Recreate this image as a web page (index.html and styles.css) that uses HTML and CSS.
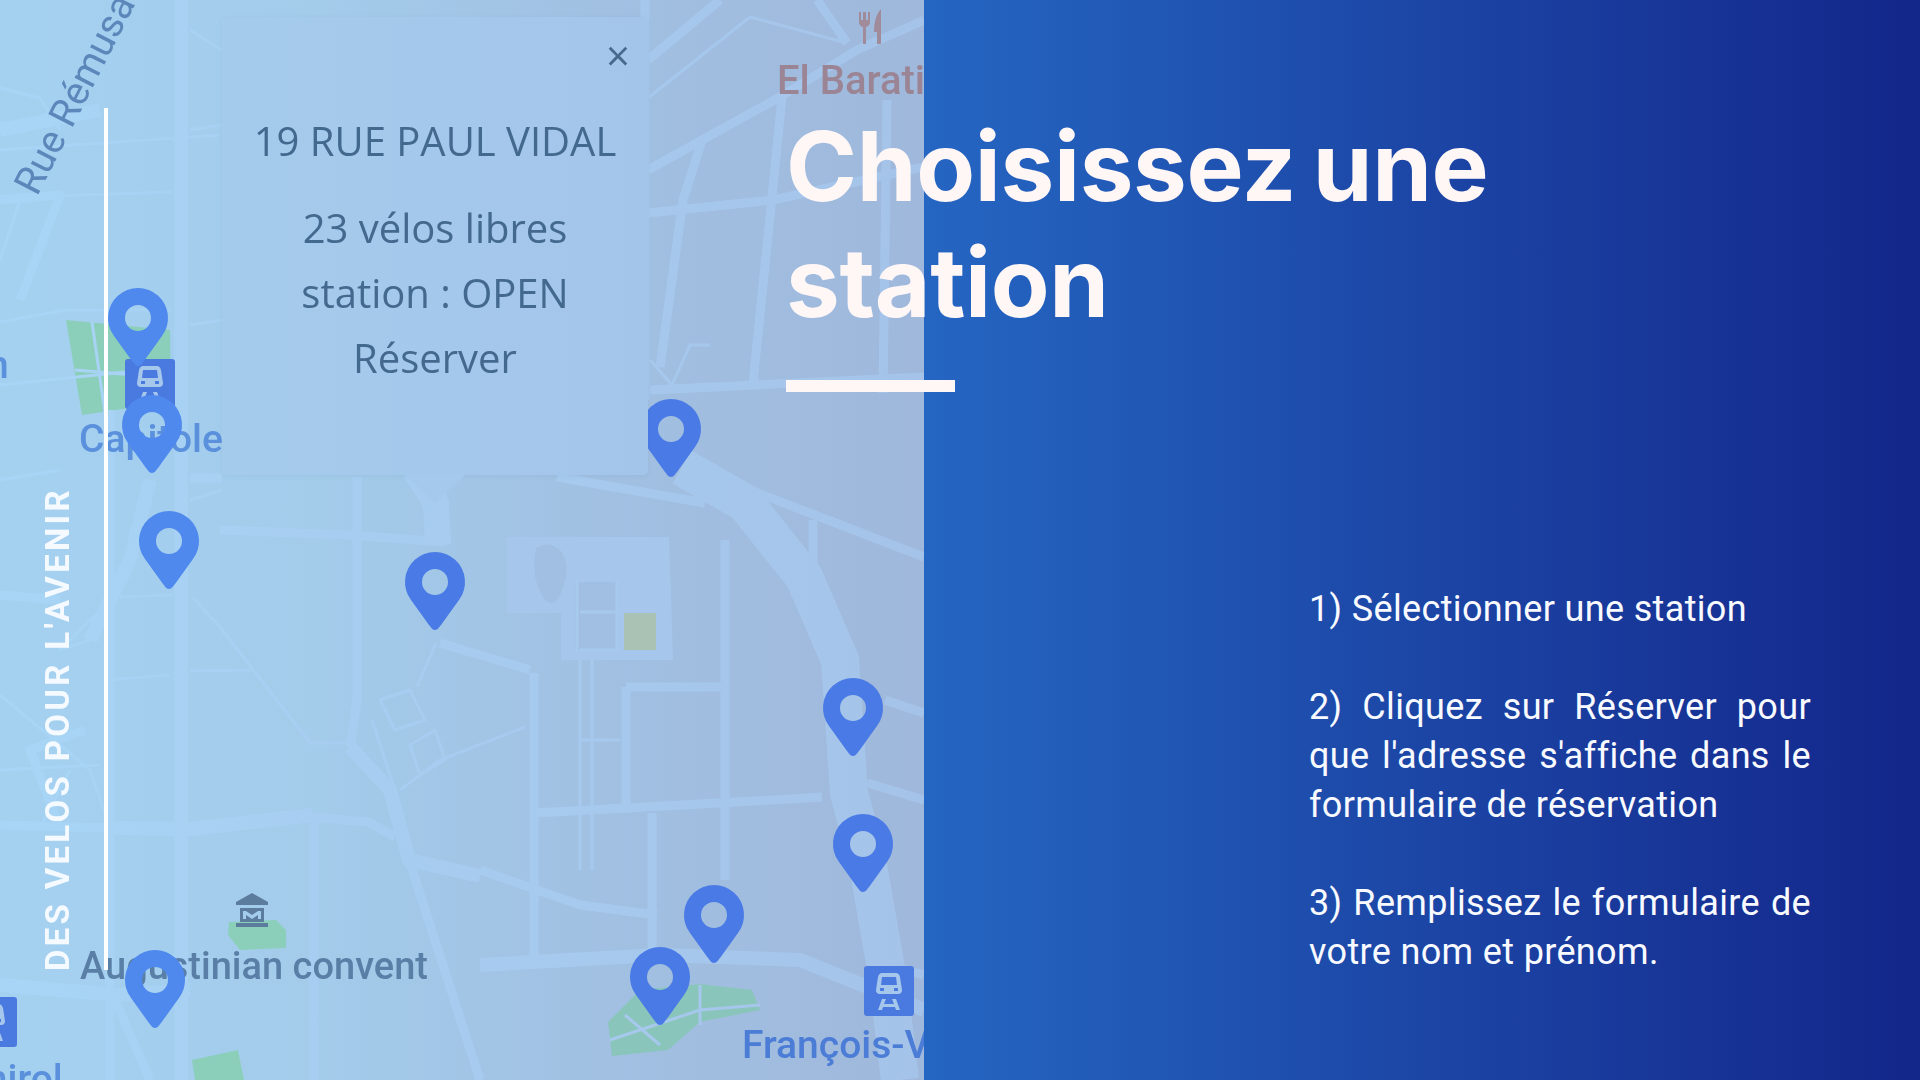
FILE: index.html
```html
<!DOCTYPE html>
<html lang="fr">
<head>
<meta charset="utf-8">
<title>Choisissez une station</title>
<link rel="stylesheet" href="styles.css">
</head>
<body>
<main class="stage">
  <section class="map-panel">
    <svg class="map" viewBox="0 0 924 1080" width="924" height="1080" aria-label="Carte de Toulouse">
      <defs>
        <linearGradient id="road" gradientUnits="userSpaceOnUse" x1="0" y1="0" x2="924" y2="0">
          <stop offset="0" stop-color="#a8d5f6"/>
          <stop offset="0.4" stop-color="#a7cdf1"/>
          <stop offset="1" stop-color="#a5c3e9"/>
        </linearGradient>
        <symbol id="pin" viewBox="-31 -31 62 80" width="62" height="80" overflow="visible">
          <path fill-rule="evenodd" d="M0 48 C-3 48 -4 45 -6 43 L-24 18 A30 30 0 1 1 24 18 L6 43 C4 45 3 48 0 48 Z M13 0 A13 13 0 1 0 -13 0 A13 13 0 1 0 13 0 Z"/>
        </symbol>
        <symbol id="train" viewBox="0 0 50 50" width="50" height="50">
          <rect class="station-bg" width="50" height="50" rx="3"/>
          <path class="station-fg" d="M18 7 H32 Q35 7 36 11 L38 24 Q38 28 34 28 H16 Q12 28 12 24 L14 11 Q15 7 18 7 Z M18 11 L17 19 H33 L32 11 Z M16 22 V25 H20 V22 Z M30 22 V25 H34 V22 Z"/>
          <path class="station-fg" d="M14 44 L18 33 H22 L20 38 H30 L28 33 H32 L36 44 H32 L31 41 H19 L18 44 Z"/>
        </symbol>
      </defs>

      <g class="parks">
        <path d="M66 320 L170 330 L171 395 L150 405 L82 415 Z"/>
        <path d="M229 922 L276 920 L286 930 L286 948 L240 950 L228 935 Z"/>
        <path d="M192 1060 L238 1050 L244 1080 L195 1080 Z"/>
        <path class="park-right" d="M608 1022 L640 990 L700 984 L752 990 L760 1010 L700 1022 L668 1050 L612 1056 Z"/>
      </g>

      <g class="roads plaza">
        <path d="M507 537 H669 L673 660 H561 V613 H507 Z"/>
      </g>
      <path class="block" d="M575 582 H617 V650 H575 Z"/>
      <path class="block" d="M536 548 Q548 540 560 550 Q572 565 562 590 Q555 610 545 600 Q530 580 536 548 Z"/>
      <path class="park-sand" d="M624 613 H656 V650 H624 Z"/>

      <g class="roads thin">
        <path d="M0 150 L220 135"/>
        <path d="M20 197 L172 192"/>
        <path d="M20 200 L0 260"/>
        <path d="M0 88 L40 98 L60 130"/>
        <path d="M190 30 L222 50"/>
        <path d="M0 322 L66 310 L172 310"/>
        <path d="M92 322 L106 420"/>
        <path d="M0 385 L125 372"/>
        <path d="M75 370 L170 378"/>
        <path d="M60 470 L0 480"/>
        <path d="M190 130 L222 125"/>
        <path d="M190 325 L222 320"/>
        <path d="M190 500 L222 490"/>
        <path d="M0 695 L90 770 L110 828"/>
        <path d="M0 770 L100 765"/>
        <path d="M40 828 L70 770"/>
        <path d="M100 610 L60 650 L90 640"/>
        <path d="M193 598 L220 627 L310 743 L346 743"/>
        <path d="M190 671 L251 670"/>
        <path d="M108 680 L170 675"/>
        <path d="M120 597 L173 595"/>
        <path d="M400 790 L440 760 L525 727"/>
        <path d="M417 687 L436 643"/>
        <path d="M380 700 L410 690 L425 720 L395 730 Z"/>
        <path d="M410 745 L435 730 L445 760 L420 775 Z"/>
        <path d="M372 720 L395 790"/>
        <path d="M580 612 H620 M580 650 H620 M577 580 V652 M617 580 V652"/>
        <path d="M580 740 H620 M580 660 V870 M592 660 V870"/>
        <path d="M648 98 L750 17 L843 42"/>
        <path d="M650 360 L672 385 L690 345 H710"/>
        <path d="M610 1040 L700 1010 L760 1005"/>
        <path d="M625 1015 L660 1045 M700 985 L700 1025"/>
      </g>

      <g class="roads mid">
        <path d="M0 200 L60 195 L20 300"/>
        <path d="M357 477 V700 L350 747"/>
        <path d="M220 530 L350 535 L445 542"/>
        <path d="M557 477 L705 503"/>
        <path d="M750 490 L924 557"/>
        <path d="M813 520 V577"/>
        <path d="M725 540 V880"/>
        <path d="M885 700 L924 713"/>
        <path d="M867 783 L924 800"/>
        <path d="M534 813 L718 803 L822 797"/>
        <path d="M626 687 V813"/>
        <path d="M626 687 H725"/>
        <path d="M534 673 V960"/>
        <path d="M440 643 L530 670"/>
        <path d="M220 827 L310 817 L368 822 L395 837"/>
        <path d="M314 813 V1080"/>
        <path d="M652 813 V950"/>
        <path d="M648 60 L720 0"/>
        <path d="M648 170 L780 97 L857 50 L924 20"/>
        <path d="M817 0 L847 43"/>
        <path d="M648 213 L773 200 L924 167"/>
        <path d="M703 137 L683 200 L660 367"/>
        <path d="M782 97 L773 187 L753 383"/>
        <path d="M887 100 L883 393"/>
        <path d="M650 390 L924 377"/>
        <path d="M645 0 V400"/>
        <path d="M480 870 L580 905 L657 915"/>
        <path d="M0 825 L110 828"/>
        <path d="M0 595 L60 600"/>
        <path d="M85 730 L30 750 L60 828"/>
        <path d="M110 410 V1080"/>
        <path d="M190 478 L222 478"/>
        <path d="M115 1000 L150 1080"/>
        <path d="M409 860 L480 1080"/>
        <path d="M867 960 L924 975"/>
      </g>

      <g class="roads wide">
        <path d="M181 0 V1080"/>
        <path d="M110 828 L190 829 L313 815"/>
        <path d="M350 747 L390 790 L409 860 L480 876"/>
        <path d="M0 985 L120 995 L190 990"/>
        <path d="M480 965 L660 955 L800 960 L900 1000 L924 1010"/>
        <path d="M0 130 L100 110"/>
        <path d="M90 640 L130 560 L150 480"/>
      </g>

      <path class="roads stem" d="M415 470 L436 503 L438 545"/>
      <path class="roads boulevard" d="M682 467 L745 503 L804 577 L840 660 L849 793 L867 860 L888 980 L900 1080"/>

      <use href="#train" x="125" y="359"/>
      <use href="#train" x="864" y="966"/>
      <use href="#train" x="-33" y="997"/>

      <text class="label label-street" transform="translate(37 197) rotate(-63)">Rue Rémusat</text>
      <text class="label label-transit" x="-13" y="378">n</text>
      <text class="label label-transit" x="79" y="452">Capitole</text>
      <text class="label label-poi" x="80" y="979">Augustinian convent</text>
      <text class="label label-transit-right" x="742" y="1058">François-Verdier</text>
      <text class="label label-food" x="777" y="94">El Barati</text>
      <text class="label label-transit" x="-52" y="1092">Amirol</text>

      <g class="icon-food">
        <path d="M859 12 V22 Q859 26 863 27 V44 H866 V27 Q870 26 870 22 V12 H868 V20 H866 V12 H863 V20 H861 V12 Z"/>
        <path d="M877 44 V32 H874 Q874 16 881 9 V44 Z"/>
      </g>

      <g class="icon-museum">
        <path d="M236 902 L252 893 L268 902 V905 H236 Z"/>
        <path d="M240 908 H264 V922 H240 Z M243 911 V919 H246 V915 L252 919 L258 915 V919 H261 V911 H258 L252 915 L246 911 Z" fill-rule="evenodd"/>
        <path d="M236 923 H268 V927 H236 Z"/>
      </g>

      <g class="pins-left">
        <use href="#pin" x="107" y="287"/>
        <use href="#pin" x="121" y="394"/>
        <use href="#pin" x="138" y="510"/>
        <use href="#pin" x="124" y="949"/>
      </g>
      <g class="pins-right">
        <use href="#pin" x="640" y="398"/>
        <use href="#pin" x="404" y="551"/>
        <use href="#pin" x="822" y="677"/>
        <use href="#pin" x="832" y="813"/>
        <use href="#pin" x="683" y="884"/>
        <use href="#pin" x="629" y="946"/>
      </g>
    </svg>

    <aside class="popup">
      <span class="popup-close">×</span>
      <p class="popup-title">19 RUE PAUL VIDAL</p>
      <p class="popup-line">23 vélos libres</p>
      <p class="popup-line">station : OPEN</p>
      <p class="popup-line">Réserver</p>
    </aside>

    <div class="side-rule"></div>
    <p class="side-label">DES VELOS POUR L'AVENIR</p>
  </section>

  <section class="info-panel">
    <h1 class="title">Choisissez une<br>station</h1>
    <div class="title-rule"></div>
    <div class="steps">
      <p class="step">1) Sélectionner une station</p>
      <p class="step">2) Cliquez sur Réserver pour que l'adresse s'affiche dans le formulaire de réservation</p>
      <p class="step">3) Remplissez le formulaire de votre nom et prénom.</p>
    </div>
  </section>
</main>
</body>
</html>
```

FILE: styles.css
```css
* { box-sizing: border-box; }
html, body { margin: 0; padding: 0; }
body { width: 1920px; height: 1080px; overflow: hidden; background: #13278b; }
p, h1 { margin: 0; }

.stage { display: flex; width: 1920px; height: 1080px; }

/* Map */
.map-panel {
  position: relative;
  flex: 0 0 924px;
  height: 1080px;
  overflow: hidden;
  background: linear-gradient(90deg, #a5d1f1 0%, #a3cbea 35%, #a1c0e2 65%, #9fb8db 100%);
}
.map { display: block; filter: blur(0.7px); }
.parks path { fill: #8bcfbb; }
.parks .park-right { fill: #8ac5bb; }
.park-sand { fill: #a9c2b4; }
.block { fill: #a1bfe2; }
.roads { fill: none; stroke: url(#road); stroke-linejoin: round; stroke-linecap: butt; }
.plaza { fill: #a6c7eb; stroke: none; }
.thin { stroke-width: 3; }
.mid { stroke-width: 9; }
.wide { stroke-width: 14; }
.stem { stroke-width: 26; }
.boulevard { stroke-width: 38; }
.pins-left use { fill: #4f89ee; }
.pins-right use { fill: #4a7ae6; }
.station-bg { fill: #4a79e0; }
.station-fg { fill: #a6c7ec; fill-rule: evenodd; }
.label { font-family: "Roboto", "Noto Sans", sans-serif; font-weight: 500; font-size: 39px; }
.label-street { fill: #5c87bb; font-size: 39px; font-weight: 400; }
.label-transit { fill: #5a90dc; }
.label-transit-right { fill: #4b7cd6; }
.label-poi { fill: #5a7fa6; font-size: 38px; }
.label-food { fill: #9b8595; font-size: 40px; }
.icon-food { fill: #a08b9a; }
.icon-museum { fill: #5c7c9e; }

/* Popup */
.popup {
  position: absolute;
  left: 222px;
  top: 17px;
  width: 426px;
  height: 458px;
  padding-top: 91px;
  background: linear-gradient(90deg, #a5cbec, #a3c5ea);
  border-radius: 5px;
  box-shadow: 0 1px 4px rgba(70, 100, 150, 0.08);
  font-family: "Open Sans", sans-serif;
  font-size: 40px;
  font-weight: 400;
  line-height: 65px;
  color: #44698e;
  text-align: center;
  filter: blur(0.4px);
}
.popup::after {
  content: "";
  position: absolute;
  left: 183px;
  top: 100%;
  width: 60px;
  height: 28px;
  background: #a5c9ec;
  clip-path: polygon(0 0, 100% 0, 50% 100%);
}
.popup-title { margin-bottom: 22px; }
.popup-close {
  position: absolute;
  right: 18px;
  top: 15px;
  font-size: 42px;
  line-height: 46px;
  color: #466a8c;
}

/* Side label */
.side-rule {
  position: absolute;
  left: 104px;
  top: 108px;
  width: 4px;
  height: 862px;
  background: #fff;
}
.side-label {
  position: absolute;
  left: 41px;
  bottom: 109px;
  writing-mode: vertical-rl;
  transform: rotate(180deg);
  font-family: "Roboto", sans-serif;
  font-weight: 700;
  font-size: 33px;
  line-height: 34px;
  letter-spacing: 3.3px;
  color: #f4faff;
  white-space: nowrap;
}

/* Info */
.info-panel {
  position: relative;
  flex: 1;
  height: 1080px;
  padding-top: 108px;
  background: linear-gradient(90deg, #2566c2 0%, #13268a 100%);
  color: #fff;
}
.title {
  margin-left: -138px;
  font-family: "Inter", sans-serif;
  font-weight: 700;
  font-size: 96px;
  line-height: 116px;
  letter-spacing: -0.3px;
  word-spacing: -6px;
  color: #fff6f6;
  white-space: nowrap;
}
.title-rule {
  width: 169px;
  height: 12px;
  margin: 40px 0 193px -138px;
  background: #fff6f6;
}
.steps { width: 502px; margin-left: 385px; }
.step {
  font-family: "Roboto", sans-serif;
  font-weight: 400;
  font-size: 36px;
  line-height: 49px;
  letter-spacing: 0.35px;
  text-align: justify;
  color: #f8faff;
}
.step + .step { margin-top: 49px; }
```
